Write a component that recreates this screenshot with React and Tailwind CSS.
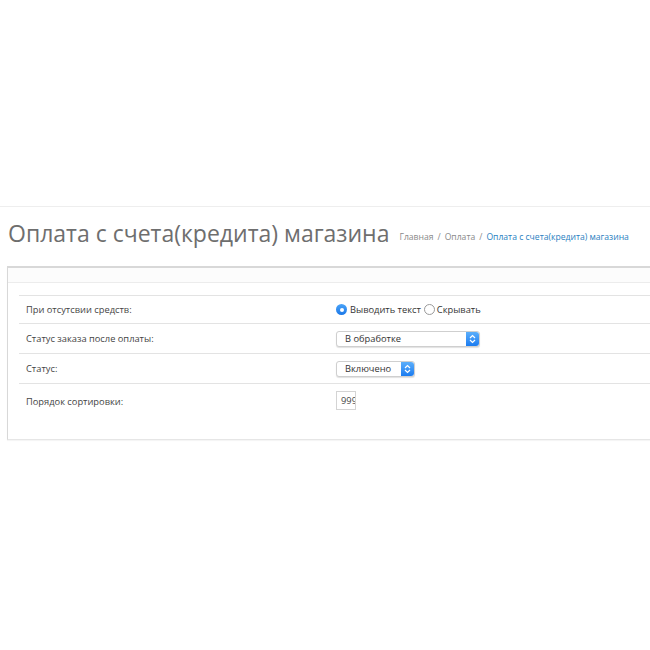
import React from "react";

function Stepper() {
  return (
    <span className="flex h-full w-[13px] items-center justify-center rounded-r-[3px] bg-gradient-to-b from-[#5aaefb] to-[#1a7cf0]">
      <svg width="7" height="10" viewBox="0 0 7 10" fill="none" stroke="white" strokeWidth="1.2">
        <path d="M1 4 L3.5 1.5 L6 4" />
        <path d="M1 6 L3.5 8.5 L6 6" />
      </svg>
    </span>
  );
}

function Select({ value, width }) {
  return (
    <div
      className={`flex h-[16px] items-center justify-between rounded-[3px] border border-[#cfcfcf] bg-white shadow-[0_1px_1px_rgba(0,0,0,0.12)] ${width}`}
    >
      <span className="pl-[8px] text-[9.3px] leading-none text-[#333]">{value}</span>
      <Stepper />
    </div>
  );
}

function Row({ label, children, height, last }) {
  return (
    <div className={`flex border-t border-[#e3e3e3] ${height} ${last ? "items-start pt-[7px]" : "items-center"}`}>
      <div className={`w-[317px] pl-[7px] text-[9.3px] text-[#444] ${last ? "pt-[4px]" : ""}`}>{label}</div>
      <div className="flex items-center">{children}</div>
    </div>
  );
}

export default function App() {
  return (
    <div className="h-[650px] w-[650px] overflow-hidden bg-white font-['Open_Sans',sans-serif]">
      <div className="h-[206px]" />
      <div className="border-t border-[#eeeeee]">
        {/* heading + breadcrumb */}
        <div className="mt-[10px] flex items-baseline whitespace-nowrap pl-[8px]">
          <h1 className="shrink-0 text-[23px] leading-[32px] text-[#6e6e6e]">Оплата с счета(кредита) магазина</h1>
          <div className="relative -top-[2px] ml-[10px] shrink-0 text-[8.6px] text-[#8a8a8a]">
            <span>Главная</span>
            <span className="mx-[4px]">/</span>
            <span>Оплата</span>
            <span className="mx-[4px]">/</span>
            <span className="text-[#2a7fc1]">Оплата с счета(кредита) магазина</span>
          </div>
        </div>

        {/* panel */}
        <div className="ml-[7px] mt-[17px] w-[660px] border-l border-t-2 border-b border-[#d8d8d8] border-b-[#e6e6e6] shadow-[0_1px_1px_rgba(0,0,0,0.04)]">
          <div className="h-[15px] border-b border-[#ececec] bg-[#fcfcfc]" />
          <div className="ml-[11px] mt-[12px] pb-[19px]">
            <Row label="При отсутсвии средств:" height="h-[28px]">
              <span className="flex h-[11px] w-[11px] items-center justify-center rounded-full bg-gradient-to-b from-[#4aa3f8] to-[#1a78e8]">
                <span className="h-[4px] w-[4px] rounded-full bg-white" />
              </span>
              <span className="ml-[3px] text-[9.3px] text-[#333]">Выводить текст</span>
              <span className="ml-[3px] h-[11px] w-[11px] rounded-full border border-[#9a9a9a] bg-white" />
              <span className="ml-[2px] text-[9.3px] text-[#333]">Скрывать</span>
            </Row>
            <Row label="Статус заказа после оплаты:" height="h-[30px]">
              <Select value="В обработке" width="w-[144px]" />
            </Row>
            <Row label="Статус:" height="h-[30px]">
              <Select value="Включено" width="w-[79px]" />
            </Row>
            <Row label="Порядок сортировки:" height="h-[37px]" last>
              <div className="h-[19px] w-[20px] overflow-hidden whitespace-nowrap border border-[#d4d4d4] pl-[4px] text-[9.3px] leading-[17px] text-[#444]">
                999
              </div>
            </Row>
          </div>
        </div>
      </div>
    </div>
  );
}
